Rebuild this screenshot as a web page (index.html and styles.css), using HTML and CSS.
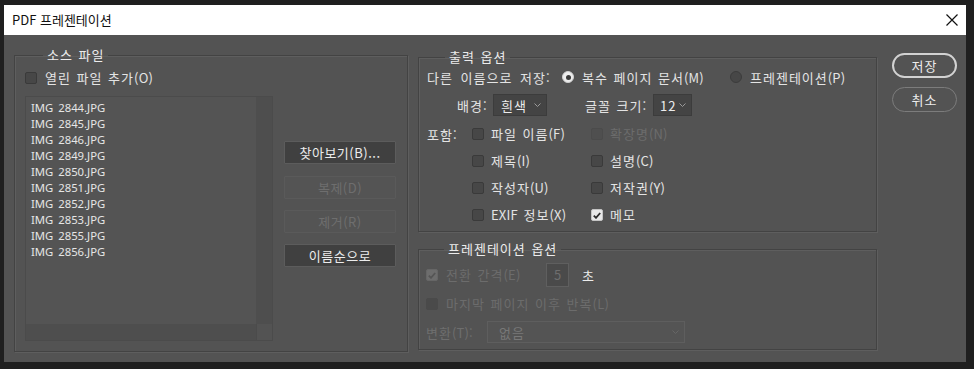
FILE: index.html
```html
<!DOCTYPE html>
<html lang="ko">
<head>
<meta charset="utf-8">
<title>PDF 프레젠테이션</title>
<link rel="stylesheet" href="styles.css">
</head>
<body>
<div class="window">
  <div class="titlebar">
    <span class="title">PDF 프레젠테이션</span>
    <svg class="close" width="12" height="12" viewBox="0 0 12 12"><path d="M0.5 0.5 L11.5 11.5 M11.5 0.5 L0.5 11.5" stroke="#111" stroke-width="1.2" fill="none"/></svg>
  </div>
  <div class="content">
    <fieldset class="group src">
      <legend>소스 파일</legend>
      <label class="check open-row"><span class="cb"></span><span>열린 파일 추가<span class="lat">(O)</span></span></label>
      <div class="src-body">
        <div class="listbox">
          <ul class="files">
            <li>IMG 2844.JPG</li>
            <li>IMG 2845.JPG</li>
            <li>IMG 2846.JPG</li>
            <li>IMG 2849.JPG</li>
            <li>IMG 2850.JPG</li>
            <li>IMG 2851.JPG</li>
            <li>IMG 2852.JPG</li>
            <li>IMG 2853.JPG</li>
            <li>IMG 2855.JPG</li>
            <li>IMG 2856.JPG</li>
          </ul>
          <div class="vscroll"></div>
          <div class="hscroll"></div>
          <div class="corner"></div>
        </div>
        <div class="src-buttons">
          <button class="btn first">찾아보기(B)...</button>
          <button class="btn disabled">복제(D)</button>
          <button class="btn disabled">제거(R)</button>
          <button class="btn">이름순으로</button>
        </div>
      </div>
    </fieldset>

    <div class="right-col">
      <fieldset class="group output">
        <legend>출력 옵션</legend>
        <div class="row r1">
          <span class="save-as">다른 이름으로 저장:</span>
          <label class="radio opt-multi"><span class="rb on"></span><span>복수 페이지 문서<span class="lat">(M)</span></span></label>
          <label class="radio"><span class="rb"></span><span>프레젠테이션<span class="lat">(P)</span></span></label>
        </div>
        <div class="row r2">
          <span class="lbl-bg">배경:</span>
          <span class="select sel-bg">흰색<svg class="chev" width="7" height="4" viewBox="0 0 7 4"><path d="M0.5 0.5 L3.5 3.5 L6.5 0.5" stroke="#9a9a9a" fill="none"/></svg></span>
          <span class="lbl-size">글꼴 크기:</span>
          <span class="select sel-size">12<svg class="chev" width="7" height="4" viewBox="0 0 7 4"><path d="M0.5 0.5 L3.5 3.5 L6.5 0.5" stroke="#9a9a9a" fill="none"/></svg></span>
        </div>
        <div class="include">
          <span class="inc-lbl">포함:</span>
          <label class="check"><span class="cb"></span><span>파일 이름<span class="lat">(F)</span></span></label>
          <label class="check dis"><span class="cb"></span><span>확장명<span class="lat">(N)</span></span></label>
          <span></span>
          <label class="check"><span class="cb"></span><span>제목<span class="lat">(I)</span></span></label>
          <label class="check"><span class="cb"></span><span>설명<span class="lat">(C)</span></span></label>
          <span></span>
          <label class="check"><span class="cb"></span><span>작성자<span class="lat">(U)</span></span></label>
          <label class="check"><span class="cb"></span><span>저작권<span class="lat">(Y)</span></span></label>
          <span></span>
          <label class="check"><span class="cb"></span><span><span class="lat">EXIF</span> 정보<span class="lat">(X)</span></span></label>
          <label class="check"><span class="cb on"><svg width="8" height="7" viewBox="0 0 8 7"><path d="M0.8 3.6 L3 5.8 L7.2 1" stroke="#2a2a2a" stroke-width="1.8" fill="none"/></svg></span><span>메모</span></label>
        </div>
      </fieldset>

      <fieldset class="group present">
        <legend>프레젠테이션 옵션</legend>
        <div class="row p1">
          <label class="check dis"><span class="cb dis-on"><svg width="8" height="7" viewBox="0 0 8 7"><path d="M0.8 3.6 L3 5.8 L7.2 1" stroke="#555" stroke-width="1.8" fill="none"/></svg></span><span>전환 간격<span class="lat">(E)</span></span></label>
          <span class="num">5</span>
          <span class="sec">초</span>
        </div>
        <div class="row p2">
          <label class="check dis"><span class="cb dis-box"></span><span>마지막 페이지 이후 반복<span class="lat">(L)</span></span></label>
        </div>
        <div class="row p3">
          <span class="dis-text">변환<span class="lat">(T):</span></span>
          <span class="select sel-trans">없음<svg class="chev" width="7" height="4" viewBox="0 0 7 4"><path d="M0.5 0.5 L3.5 3.5 L6.5 0.5" stroke="#666" fill="none"/></svg></span>
        </div>
      </fieldset>
    </div>

    <div class="actions">
      <button class="pill primary">저장</button>
      <button class="pill">취소</button>
    </div>
  </div>
</div>
</body>
</html>
```

FILE: styles.css
```css
* { box-sizing: border-box; }
html, body { margin: 0; padding: 0; }
body {
  background: #1f1f1f;
  padding: 5px 8px 7px 4px;
  font-family: "Noto Sans CJK KR", "Noto Sans", sans-serif;
  font-size: 13px;
  color: #e4e4e4;
}
.window {
  width: 962px;
  height: 357px;
  display: flex;
  flex-direction: column;
  background: #535353;
}
.titlebar {
  height: 30px;
  background: #ffffff;
  display: flex;
  align-items: center;
  justify-content: space-between;
  padding: 0 7px 0 8px;
  color: #111;
}
.title { font-size: 13px; line-height: 16px; }
.close { display: block; margin-right: 1px; }

.content {
  flex: 1;
  display: flex;
  padding: 12px 0 10px 10px;
  letter-spacing: 1px;
  word-spacing: 1px;
}
.lat { letter-spacing: 0.2px; }

fieldset.group {
  margin: 0;
  padding: 0;
  border: 1px solid #434343;
  box-shadow: 1px 1px 0 #5e5e5e, inset 1px 1px 0 #5e5e5e;
  min-width: 0;
}
fieldset.group legend {
  padding: 0 4px;
  margin-left: 18px;
  font-size: 13px;
  line-height: 16px;
  color: #ececec;
}

/* source */
fieldset.src {
  width: 394px;
  display: flex;
  flex-direction: column;
  padding: 7px 0 10px 10px;
}
.check {
  display: flex;
  align-items: center;
  gap: 8px;
  height: 16px;
  line-height: 16px;
  white-space: nowrap;
}
.cb {
  width: 12px;
  height: 12px;
  flex: none;
  border: 1px solid #3a3a3a;
  background: #474747;
  border-radius: 2px;
  display: flex;
  align-items: center;
  justify-content: center;
}
.cb.on { background: #e8e8e8; border-color: #c4c4c4; }
.check.dis { color: #6c6c6c; }
.check.dis .cb { background: #4f4f4f; border-color: #4b4b4b; }
.check.dis .cb.dis-on { background: #6d6d6d; border-color: #666; }
.check.dis .cb.dis-box { background: #4a4a4a; border-color: #4a4a4a; }

.src-body {
  flex: 1;
  display: flex;
  gap: 11px;
  margin-top: 10px;
}
.listbox {
  width: 248px;
  display: grid;
  grid-template-columns: 1fr 16px;
  grid-template-rows: 1fr 16px;
  border: 1px solid #4b4b4b;
  background: #545454;
}
.files {
  list-style: none;
  margin: 0;
  padding: 3px 0 0 5px;
  font-family: "Noto Sans", sans-serif;
  font-size: 11.3px;
  line-height: 16px;
  letter-spacing: 0;
  word-spacing: 2px;
  color: #e6e6e6;
}
.vscroll { background: #4e4e4e; }
.hscroll { background: #4e4e4e; }
.corner { background: #535353; border-left: 1px solid #4b4b4b; }

.src-buttons {
  width: 112px;
  display: flex;
  flex-direction: column;
  gap: 11px;
  padding-top: 45px;
}
.btn {
  height: 23px;
  padding: 0;
  font-family: inherit;
  font-size: 13px;
  letter-spacing: 0.5px;
  color: #ececec;
  background: #404040;
  border: 1px solid #5c5c5c;
  border-radius: 1px;
}
.btn.first { margin-bottom: 1px; }
.btn.disabled {
  background: #545454;
  border-color: #5a5a5a;
  color: #6e6e6e;
}

/* right column */
.right-col {
  width: 459px;
  margin-left: 10px;
  display: flex;
  flex-direction: column;
  gap: 9px;
}
fieldset.output {
  margin-top: 2px;
  height: 183px;
  padding: 2px 8px 0 8px;
}
.row { display: flex; align-items: center; white-space: nowrap; }
.r1 { height: 20px; }
.save-as { width: 135px; word-spacing: 3px; }
.radio { display: flex; align-items: center; gap: 8px; }
.opt-multi { width: 168px; }
.rb {
  width: 12px;
  height: 12px;
  border-radius: 50%;
  background: #474747;
  border: 1px solid #3c3c3c;
  display: flex;
  align-items: center;
  justify-content: center;
}
.rb.on { background: #ededed; border-color: #d0d0d0; }
.rb.on::after {
  content: "";
  width: 5px;
  height: 5px;
  border-radius: 50%;
  background: #3a3a3a;
}
.r2 { height: 22px; margin-top: 7px; padding-left: 30px; }
.lbl-bg { width: 36px; }
.lbl-size { margin-left: 38px; width: 68px; }
.select {
  height: 22px;
  display: flex;
  align-items: center;
  justify-content: space-between;
  padding: 0 5px 0 7px;
  background: #444444;
  border: 1px solid #3c3c3c;
  color: #ececec;
}
.sel-bg { width: 54px; }
.sel-size { width: 39px; padding-left: 6px; }
.chev { flex: none; }

.include {
  display: grid;
  grid-template-columns: 45px 119px 1fr;
  grid-auto-rows: 16px;
  row-gap: 11px;
  margin-top: 10px;
  align-items: center;
}
.include .check { gap: 7px; }

fieldset.present {
  height: 109px;
  padding: 6px 8px 0 7px;
  color: #6e6e6e;
}
.p1 { height: 24px; }
.p1 .check { width: 120px; }
.num {
  width: 23px;
  height: 24px;
  border: 1px solid #5f5f5f;
  background: #4a4a4a;
  color: #6e6e6e;
  padding-left: 7px;
  line-height: 22px;
}
.sec { margin-left: 13px; color: #ececec; }
.p2 { height: 20px; margin-top: 7px; }
.p3 { height: 22px; margin-top: 7px; }
.dis-text { width: 61px; color: #6e6e6e; }
.sel-trans {
  width: 198px;
  background: #545454;
  border: 1px solid #5e5e5e;
  color: #787878;
  padding-left: 11px;
}

/* actions */
.actions {
  width: 65px;
  margin-left: 15px;
  margin-top: 6px;
  display: flex;
  flex-direction: column;
  gap: 9px;
}
.pill {
  height: 25px;
  padding: 0;
  font-family: inherit;
  font-size: 13px;
  letter-spacing: 1px;
  color: #ececec;
  background: #535353;
  border: 1.5px solid #7c7c7c;
  border-radius: 13px;
}
.pill.primary { border: 2px solid #d2d2d2; }
```
